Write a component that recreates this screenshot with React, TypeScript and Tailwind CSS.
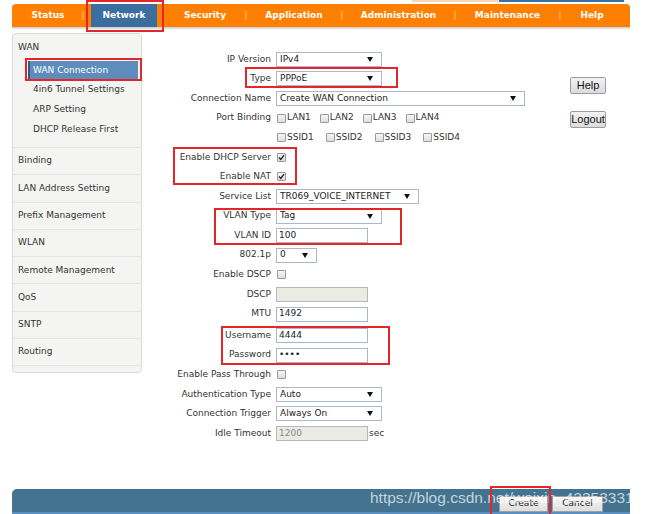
import React from "react";

const FONT = { fontFamily: '"DejaVu Sans", Verdana, sans-serif' };

function Arrow() {
  return (
    <svg width="6" height="5" viewBox="0 0 6 5" className="shrink-0">
      <path d="M0 0 L6 0 L3 5 Z" fill="#111" />
    </svg>
  );
}

function Select({ w, value }: { w: string; value: string }) {
  return (
    <div
      className={`${w} h-[15px] border border-[#a9b8cc] bg-white flex items-center justify-between pl-[3px] pr-[8px] text-[#222]`}
    >
      <span>{value}</span>
      <Arrow />
    </div>
  );
}

function TextBox({ value, disabled, w = "w-[92px]" }: { value: string; disabled?: boolean; w?: string }) {
  return (
    <div
      className={`${w} h-[15px] border flex items-center pl-[2px] ${
        disabled ? "bg-[#ebebe4] border-[#b4b9bf] text-[#8a8a8a]" : "bg-white border-[#a9b8cc] text-[#222]"
      }`}
    >
      {value}
    </div>
  );
}

function Check({ checked }: { checked?: boolean }) {
  return (
    <span className="w-[9px] h-[9px] shrink-0 rounded-[1px] border border-[#9a9a9a] bg-gradient-to-b from-[#f6f6f6] to-[#dedede] flex items-center justify-center">
      {checked && (
        <svg width="7" height="7" viewBox="0 0 7 7">
          <path d="M1 3.6 L2.8 5.4 L6 1.2" stroke="#222" strokeWidth="1.4" fill="none" />
        </svg>
      )}
    </span>
  );
}

function Row({ label, children, extra = "" }: { label: string; children?: React.ReactNode; extra?: string }) {
  return (
    <div className={`flex items-center h-[19.6px] ${extra}`}>
      <div className="w-[126px] text-right pr-[5px] text-[#333] whitespace-nowrap">{label}</div>
      <div className="flex items-center">{children}</div>
    </div>
  );
}

function RedBox({ c }: { c: string }) {
  return <div className={`absolute border-2 border-[#e4262b] pointer-events-none ${c}`} />;
}

const navItems = [
  { t: "Status", w: "w-[68px] pl-[4px]" },
  { sep: true },
  { gap: true },
  { t: "Network", w: "w-[66px]", active: true },
  { t: "Security", w: "w-[86px] pl-[10px]" },
  { sep: true },
  { t: "Application", w: "w-[90px]" },
  { sep: true },
  { t: "Administration", w: "w-[107px]" },
  { sep: true },
  { t: "Maintenance", w: "w-[99px]" },
  { sep: true },
  { t: "Help", w: "w-[58px]" },
];

const sideItems = [
  "Binding",
  "LAN Address Setting",
  "Prefix Management",
  "WLAN",
  "Remote Management",
  "QoS",
  "SNTP",
  "Routing",
];

export default function App() {
  return (
    <div className="relative w-[647px] h-[514px] bg-white overflow-hidden text-[9px]" style={FONT}>
      {/* thin strip above menu */}
      <div className="flex h-[4px]">
        <div className="w-[412px]" />
        <div className="w-[87px] h-[2px] bg-[#f7d9b8]" />
        <div className="w-[125px] h-[2px] bg-[#3c6f9e]" />
      </div>

      {/* top menu */}
      <div className="ml-[12px] w-[618px] h-[23px] bg-[#ff8000] rounded-t-[4px] flex items-stretch text-white font-bold">
        {navItems.map((n, i) =>
          n.sep ? (
            <div key={i} className="w-[6px] flex items-center justify-center text-[#ffd3a6] font-normal">
              |
            </div>
          ) : n.gap ? (
            <div key={i} className="w-[5px]" />
          ) : (
            <div
              key={i}
              className={`${n.w} flex items-center justify-center ${n.active ? "bg-[#3b6e9f]" : ""}`}
            >
              {n.t}
            </div>
          )
        )}
      </div>
      <div className="ml-[12px] w-[618px] h-[3px] bg-gradient-to-b from-[#c9c9c9] to-white" />

      {/* main area */}
      <div className="flex mt-[3px] h-[456px]">
        {/* sidebar */}
        <div className="ml-[12px] w-[130px] h-[340px] rounded-[4px] border border-[#d9dbd6] bg-[#f4f5f2] text-[#333] flex flex-col">
          <div className="h-[27px] flex items-center pl-[5px]">WAN</div>
          <div className="flex flex-col pb-[7px] border-b border-[#e4e5e1]">
            <div className="ml-[15px] mr-[3px] h-[19px] flex items-center pl-[3px] bg-[#5d8dba] text-white border-l-2 border-[#2f5c87]">
              WAN Connection
            </div>
            {["4in6 Tunnel Settings", "ARP Setting", "DHCP Release First"].map((s) => (
              <div key={s} className="h-[20px] flex items-center pl-[20px]">
                {s}
              </div>
            ))}
          </div>
          {sideItems.map((s) => (
            <div key={s} className="h-[27.3px] flex items-center pl-[5px] border-b border-[#e4e5e1]">
              {s}
            </div>
          ))}
        </div>

        {/* form */}
        <div className="ml-[8px] w-[410px] pt-[16.5px] flex flex-col">
          <Row label="IP Version">
            <Select w="w-[106px]" value="IPv4" />
          </Row>
          <Row label="Type">
            <Select w="w-[106px]" value="PPPoE" />
          </Row>
          <Row label="Connection Name">
            <Select w="w-[249px]" value="Create WAN Connection" />
          </Row>
          <Row label="Port Binding">
            <div className="flex items-center gap-[9px] pl-[1px] text-[#333]">
              {["LAN1", "LAN2", "LAN3", "LAN4"].map((l) => (
                <span key={l} className="flex items-center gap-[1px]">
                  <Check />
                  {l}
                </span>
              ))}
            </div>
          </Row>
          <Row label="">
            <div className="flex items-center gap-[12px] pl-[1px] text-[#333]">
              {["SSID1", "SSID2", "SSID3", "SSID4"].map((l) => (
                <span key={l} className="flex items-center gap-[1px]">
                  <Check />
                  {l}
                </span>
              ))}
            </div>
          </Row>
          <Row label="Enable DHCP Server">
            <span className="pl-[1px]">
              <Check checked />
            </span>
          </Row>
          <Row label="Enable NAT">
            <span className="pl-[1px]">
              <Check checked />
            </span>
          </Row>
          <Row label="Service List">
            <Select w="w-[143px]" value="TR069_VOICE_INTERNET" />
          </Row>
          <Row label="VLAN Type">
            <Select w="w-[106px]" value="Tag" />
          </Row>
          <Row label="VLAN ID">
            <TextBox value="100" />
          </Row>
          <Row label="802.1p">
            <Select w="w-[41px]" value="0" />
          </Row>
          <Row label="Enable DSCP">
            <span className="pl-[1px]">
              <Check />
            </span>
          </Row>
          <Row label="DSCP">
            <TextBox value="" disabled />
          </Row>
          <Row label="MTU">
            <TextBox value="1492" />
          </Row>
          <Row label="Username" extra="mt-[2px]">
            <TextBox value="4444" />
          </Row>
          <Row label="Password">
            <TextBox value="••••" />
          </Row>
          <Row label="Enable Pass Through">
            <span className="pl-[1px]">
              <Check />
            </span>
          </Row>
          <Row label="Authentication Type">
            <Select w="w-[106px]" value="Auto" />
          </Row>
          <Row label="Connection Trigger">
            <Select w="w-[106px]" value="Always On" />
          </Row>
          <Row label="Idle Timeout">
            <TextBox value="1200" disabled />
            <span className="pl-[1px] text-[#333]">sec</span>
          </Row>
        </div>

        {/* right buttons */}
        <div className="ml-[10px] pt-[44px] flex flex-col gap-[17px]" style={{ fontFamily: '"Liberation Sans", Arial, sans-serif' }}>
          <div className="w-[36px] h-[17px] rounded-[2px] border border-[#9c9c9c] bg-gradient-to-b from-[#f2f2f2] to-[#dcdcdc] flex items-center justify-center text-[11px] text-[#111]">
            Help
          </div>
          <div className="w-[36px] h-[17px] rounded-[2px] border border-[#9c9c9c] bg-gradient-to-b from-[#f2f2f2] to-[#dcdcdc] flex items-center justify-center text-[11px] text-[#111]">
            Logout
          </div>
        </div>
      </div>

      {/* bottom bar */}
      <div className="ml-[12px] w-[618px] h-[25px] bg-[#44738f] rounded-tl-[5px] border-b-2 border-[#5a8fc2] flex items-end justify-end pr-[27px] gap-[4px]">
        <div className="w-[49px] h-[16px] border border-[#a0a0a0] bg-gradient-to-b from-[#f7f7f7] to-[#dedede] flex items-center justify-center text-[#222]">
          Create
        </div>
        <div className="w-[51px] h-[16px] border border-[#a0a0a0] bg-gradient-to-b from-[#f7f7f7] to-[#dedede] flex items-center justify-center text-[#222]">
          Cancel
        </div>
      </div>

      {/* watermark */}
      <div
        className="absolute left-[370px] top-[486px] text-[15.5px] text-white/70 whitespace-nowrap pointer-events-none"
        style={{ fontFamily: '"Liberation Sans", Arial, sans-serif' }}
      >
        https://blog.csdn.net/weixin_42353331
      </div>

      {/* annotation boxes */}
      <RedBox c="left-[86px] top-0 w-[78px] h-[32px]" />
      <RedBox c="left-[25px] top-[58px] w-[117px] h-[23px]" />
      <RedBox c="left-[245px] top-[67px] w-[153px] h-[21px]" />
      <RedBox c="left-[173px] top-[147px] w-[124px] h-[38px]" />
      <RedBox c="left-[214px] top-[208px] w-[188px] h-[37px]" />
      <RedBox c="left-[221px] top-[326px] w-[169px] h-[39px]" />
      <RedBox c="left-[490px] top-[486px] w-[61px] h-[30px]" />
    </div>
  );
}
